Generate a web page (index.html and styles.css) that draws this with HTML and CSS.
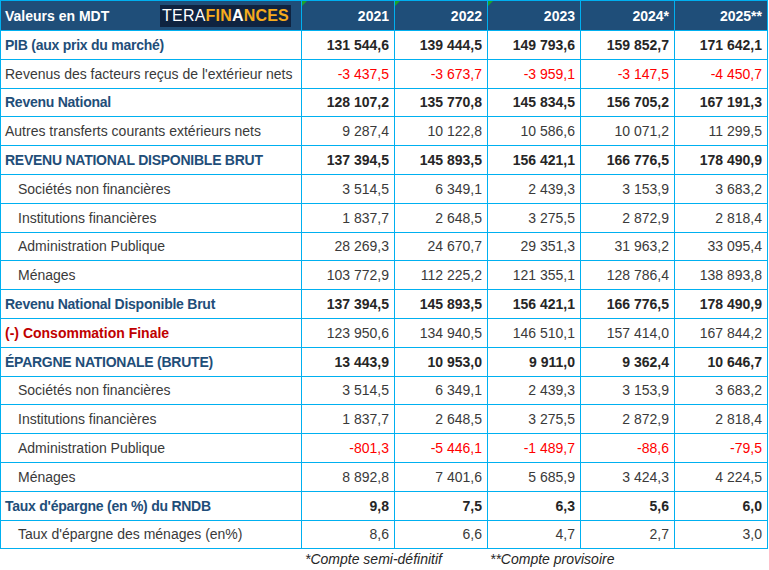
FILE: index.html
```html
<!DOCTYPE html>
<html lang="fr">
<head>
<meta charset="utf-8">
<title>Revenu national</title>
<link rel="stylesheet" href="styles.css">
</head>
<body>
<table class="tbl">
<colgroup>
<col class="c-label"><col class="c-y"><col class="c-y"><col class="c-y"><col class="c-y4"><col class="c-y">
</colgroup>
<thead>
<tr class="head">
<th class="h-label"><div class="h-wrap"><span>Valeurs en MDT</span><span class="logo"><span class="tera">TERA</span><span class="fin">FIN<span class="a">A</span>NCES</span></span></div></th>
<th class="flag">2021</th>
<th class="flag">2022</th>
<th class="flag">2023</th>
<th>2024*</th>
<th>2025**</th>
</tr>
</thead>
<tbody>
<tr class="b blue"><td>PIB (aux prix du marché)</td><td>131 544,6</td><td>139 444,5</td><td>149 793,6</td><td>159 852,7</td><td>171 642,1</td></tr>
<tr class="neg"><td>Revenus des facteurs reçus de l'extérieur nets</td><td>-3 437,5</td><td>-3 673,7</td><td>-3 959,1</td><td>-3 147,5</td><td>-4 450,7</td></tr>
<tr class="b blue"><td>Revenu National</td><td>128 107,2</td><td>135 770,8</td><td>145 834,5</td><td>156 705,2</td><td>167 191,3</td></tr>
<tr><td>Autres transferts courants extérieurs nets</td><td>9 287,4</td><td>10 122,8</td><td>10 586,6</td><td>10 071,2</td><td>11 299,5</td></tr>
<tr class="b blue"><td>REVENU NATIONAL DISPONIBLE BRUT</td><td>137 394,5</td><td>145 893,5</td><td>156 421,1</td><td>166 776,5</td><td>178 490,9</td></tr>
<tr class="sub"><td>Sociétés non financières</td><td>3 514,5</td><td>6 349,1</td><td>2 439,3</td><td>3 153,9</td><td>3 683,2</td></tr>
<tr class="sub"><td>Institutions financières</td><td>1 837,7</td><td>2 648,5</td><td>3 275,5</td><td>2 872,9</td><td>2 818,4</td></tr>
<tr class="sub"><td>Administration Publique</td><td>28 269,3</td><td>24 670,7</td><td>29 351,3</td><td>31 963,2</td><td>33 095,4</td></tr>
<tr class="sub"><td>Ménages</td><td>103 772,9</td><td>112 225,2</td><td>121 355,1</td><td>128 786,4</td><td>138 893,8</td></tr>
<tr class="b blue"><td>Revenu National Disponible Brut</td><td>137 394,5</td><td>145 893,5</td><td>156 421,1</td><td>166 776,5</td><td>178 490,9</td></tr>
<tr class="cons"><td>(-) Consommation Finale</td><td>123 950,6</td><td>134 940,5</td><td>146 510,1</td><td>157 414,0</td><td>167 844,2</td></tr>
<tr class="b blue"><td>ÉPARGNE NATIONALE (BRUTE)</td><td>13 443,9</td><td>10 953,0</td><td>9 911,0</td><td>9 362,4</td><td>10 646,7</td></tr>
<tr class="sub"><td>Sociétés non financières</td><td>3 514,5</td><td>6 349,1</td><td>2 439,3</td><td>3 153,9</td><td>3 683,2</td></tr>
<tr class="sub"><td>Institutions financières</td><td>1 837,7</td><td>2 648,5</td><td>3 275,5</td><td>2 872,9</td><td>2 818,4</td></tr>
<tr class="sub neg"><td>Administration Publique</td><td>-801,3</td><td>-5 446,1</td><td>-1 489,7</td><td>-88,6</td><td>-79,5</td></tr>
<tr class="sub"><td>Ménages</td><td>8 892,8</td><td>7 401,6</td><td>5 685,9</td><td>3 424,3</td><td>4 224,5</td></tr>
<tr class="b blue"><td>Taux d'épargne (en %) du RNDB</td><td>9,8</td><td>7,5</td><td>6,3</td><td>5,6</td><td>6,0</td></tr>
<tr class="sub"><td>Taux d'épargne des ménages (en%)</td><td>8,6</td><td>6,6</td><td>4,7</td><td>2,7</td><td>3,0</td></tr>
</tbody>
</table>
<div class="notes">
<span class="n1">*Compte semi-définitif</span>
<span class="n2">**Compte provisoire</span>
</div>
</body>
</html>
```

FILE: styles.css
```css
html, body {
  margin: 0;
  padding: 0;
  background: #ffffff;
}
body {
  font-family: "Liberation Sans", Arial, sans-serif;
  color: #3a3a3a;
  width: 769px;
}
.tbl {
  border-collapse: collapse;
  table-layout: fixed;
  width: 768px;
}
.c-label { width: 301px; }
.c-y { width: 93px; }
.c-y4 { width: 94px; }
.tbl th, .tbl td {
  border: 1px solid #00b0f0;
  padding: 0 5px 0 4px;
  white-space: nowrap;
  overflow: hidden;
}
.head th {
  height: 29px;
  background: #1f4e79;
  color: #ffffff;
  font-size: 14px;
  font-weight: bold;
  text-align: right;
  position: relative;
}
.head th.h-label {
  text-align: left;
  padding-left: 4px;
  padding-right: 10px;
}
.h-wrap {
  display: flex;
  align-items: center;
  justify-content: space-between;
}
.logo {
  display: flex;
  align-items: center;
  justify-content: center;
  background: #0f2340;
  width: 131px;
  height: 22px;
  font-size: 16px;
  letter-spacing: 0.2px;
  line-height: 1;
}
.tera {
  color: #ffffff;
  font-weight: normal;
}
.fin {
  color: #f6ab1d;
  font-weight: bold;
}
.fin .a {
  color: #ffffff;
}
.flag::before {
  content: "";
  position: absolute;
  left: 0;
  top: 0;
  border-top: 5px solid #1aa32a;
  border-right: 5px solid transparent;
}
.tbl tbody td {
  height: 27.8px;
  font-size: 14px;
  text-align: right;
  color: #3a3a3a;
}
.tbl tbody td:first-child {
  text-align: left;
  font-size: 14px;
  padding-left: 4px;
  color: #3a3a3a;
}
.tbl tbody tr.b td {
  font-weight: bold;
  color: #262626;
}
.tbl tbody tr.blue td:first-child {
  color: #1f4e79;
  font-weight: bold;
  font-size: 14px;
  letter-spacing: -0.25px;
}
.tbl tbody tr.neg td {
  color: #ff0000;
}
.tbl tbody tr.neg td:first-child {
  color: #3a3a3a;
}
.tbl tbody tr.sub td:first-child {
  padding-left: 17px;
}
.tbl tbody tr.cons td:first-child {
  color: #c00000;
  font-weight: bold;
}
.notes {
  display: flex;
  font-style: italic;
  font-size: 14px;
  color: #262626;
  padding: 2px 0 0 305px;
  gap: 48px;
}
```
